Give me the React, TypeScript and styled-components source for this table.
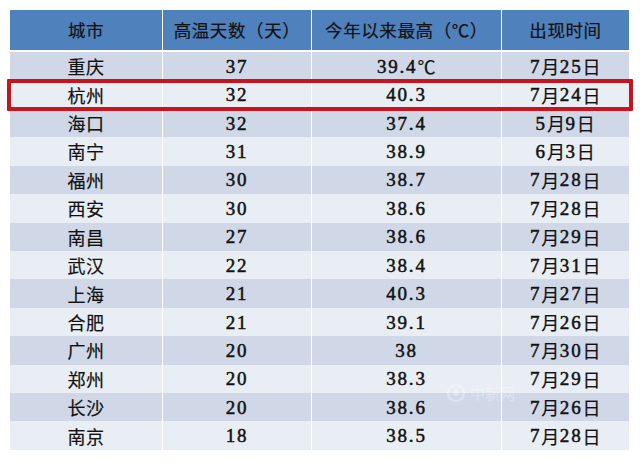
import React from "react";
import styled, { createGlobalStyle } from "styled-components";

const headerBlue = "#4f81bd";
const darkRow = "#d0d8e8";
const lightRow = "#e9edf4";
const highlightRed = "#c8141c";

const GlobalStyle = createGlobalStyle`
  html, body {
    margin: 0;
    padding: 0;
    background: #fff;
  }
`;

const rows = [
  ["重庆", "37", "39.4℃", "7月25日"],
  ["杭州", "32", "40.3", "7月24日"],
  ["海口", "32", "37.4", "5月9日"],
  ["南宁", "31", "38.9", "6月3日"],
  ["福州", "30", "38.7", "7月28日"],
  ["西安", "30", "38.6", "7月28日"],
  ["南昌", "27", "38.6", "7月29日"],
  ["武汉", "22", "38.4", "7月31日"],
  ["上海", "21", "40.3", "7月27日"],
  ["合肥", "21", "39.1", "7月26日"],
  ["广州", "20", "38", "7月30日"],
  ["郑州", "20", "38.3", "7月29日"],
  ["长沙", "20", "38.6", "7月26日"],
  ["南京", "18", "38.5", "7月28日"],
];

const headers = ["城市", "高温天数（天）", "今年以来最高（℃）", "出现时间"];

const Page = styled.div`
  position: relative;
  padding: 10px 0 0 10px;
`;

const Table = styled.div`
  width: 619px;
  display: flex;
  flex-direction: column;
`;

const columns = "152px 149px 190px 128px";

const HeaderRow = styled.div`
  display: grid;
  grid-template-columns: ${columns};
  height: 40px;
  background: ${headerBlue};
  border-bottom: 2px solid #fff;
`;

const Row = styled.div<{ $dark: boolean; $marked?: boolean }>`
  position: relative;
  display: grid;
  grid-template-columns: ${columns};
  height: 28.43px;
  background: ${(p) => (p.$dark ? darkRow : lightRow)};

  ${(p) =>
    p.$marked &&
    `
    &::after {
      content: "";
      position: absolute;
      top: -1.5px;
      bottom: -2.5px;
      left: -3px;
      right: -4px;
      border: 4px solid ${highlightRed};
      border-radius: 1px;
      pointer-events: none;
      z-index: 2;
    }
  `}
`;

const Cell = styled.div<{ $head?: boolean }>`
  display: flex;
  align-items: center;
  justify-content: center;
  font-family: "Noto Sans CJK SC", sans-serif;
  font-size: ${(p) => (p.$head ? "17.5px" : "18px")};
  letter-spacing: 0.6px;
  line-height: 1;
  white-space: nowrap;
  color: #111;
  -webkit-text-stroke: 0.2px #111;

  & + & {
    border-left: 1px solid ${(p) => (p.$head ? "rgba(255,255,255,0.55)" : "#fff")};
  }
`;

const Num = styled.span`
  font-family: "Liberation Serif", serif;
  font-size: 19px;
  letter-spacing: 1.8px;
  font-weight: 400;
  -webkit-text-stroke: 0.5px #111;
`;

const Watermark = styled.div`
  position: absolute;
  left: 446px;
  top: 382px;
  display: flex;
  align-items: center;
  gap: 4px;
  font-family: "Noto Sans CJK SC", sans-serif;
  font-size: 15px;
  color: rgba(255, 255, 255, 0.3);
  pointer-events: none;
`;

const renderText = (text: string) =>
  text.split(/([0-9.]+)/).map((part, k) =>
    /^[0-9.]+$/.test(part) ? <Num key={k}>{part}</Num> : part
  );

const App = () => {
  return (
    <>
      <GlobalStyle />
      <Page>
        <Table>
          <HeaderRow>
            {headers.map((h) => (
              <Cell $head key={h}>
                {h}
              </Cell>
            ))}
          </HeaderRow>
          {rows.map((r, i) => (
            <Row key={r[0]} $dark={i % 2 === 0} $marked={i === 1}>
              {r.map((c, j) => (
                <Cell key={j}>{renderText(c)}</Cell>
              ))}
            </Row>
          ))}
        </Table>
        <Watermark>
          <svg width="20" height="20" viewBox="0 0 20 20">
            <circle cx="10" cy="10" r="8" fill="none" stroke="rgba(255,255,255,0.35)" strokeWidth="2" />
            <circle cx="10" cy="10" r="3" fill="rgba(255,255,255,0.35)" />
          </svg>
          中新网
        </Watermark>
      </Page>
    </>
  );
};

export default App;
